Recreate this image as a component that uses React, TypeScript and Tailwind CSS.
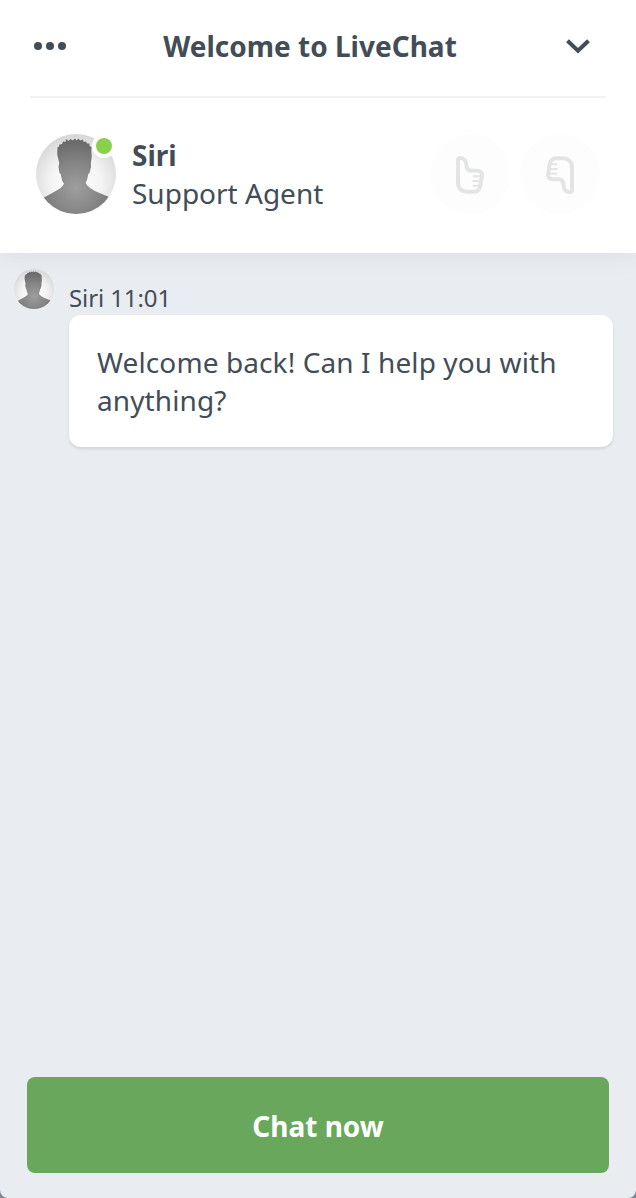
import { useId } from "react";

function Avatar({ className }: { className?: string }) {
  const id = useId();

  return (
    <svg viewBox="0 0 80 80" className={className} aria-hidden="true">
      <defs>
        <radialGradient id={`${id}-bg`} cx="0.5" cy="0.6" r="0.62">
          <stop offset="0" stopColor="#ffffff" />
          <stop offset="0.5" stopColor="#f4f4f4" />
          <stop offset="1" stopColor="#d4d4d4" />
        </radialGradient>
        <radialGradient id={`${id}-fg`} cx="40" cy="54" r="50" gradientUnits="userSpaceOnUse">
          <stop offset="0" stopColor="#9e9e9e" />
          <stop offset="0.5" stopColor="#858585" />
          <stop offset="1" stopColor="#666666" />
        </radialGradient>
        <clipPath id={`${id}-clip`}>
          <circle cx="40" cy="40" r="40" />
        </clipPath>
      </defs>
      <g clipPath={`url(#${id}-clip)`}>
        <rect width="80" height="80" fill={`url(#${id}-bg)`} />
        <path
          fill={`url(#${id}-fg)`}
          d="M21.3 17L21.5 13.5L23 12.5L23.5 10.5L26 10L27 7.5L29.5 8L30 5L32.5 7L34.5 5L36.5 6.5L39 4.5L40.5 6.5L42.5 4.5L44 6.5L47 5.5L47.5 8L50 7.5L51 9.5L53.5 9.5L53.5 12L55.5 13L55.3 18L55.8 22L54.9 29L55 33L53.5 39L52.3 40L51 46L49.6 49C51 52 55 55 60 57.5L73 63L80 80H0L8 63.5L18 58C23 55.5 26.5 53 28 49.5L26.2 47L24.7 40L23.5 39L22.5 33L23.2 29L21.3 21Z"
        />
      </g>
    </svg>
  );
}

function ThumbIcon({ className }: { className?: string }) {
  return (
    <svg
      viewBox="0 0 28 38"
      className={className}
      fill="none"
      stroke="currentColor"
      strokeLinejoin="round"
      aria-hidden="true"
    >
      <path
        strokeWidth="4"
        d="M2 4.5Q2 2 4.3 2C8 2 10.3 4.8 10.3 8.5C10.3 12 12 14.8 15.5 14.8H21C24.8 14.8 26.3 17 25.8 20.5L24.4 29.5C23.7 33.8 21.3 35.8 17.5 35.8H11.5C5.5 35.8 2 32 2 26.5Z"
      />
      <path strokeWidth="2" d="M17.5 20.2H25M17 25H25M17.5 29.8H24" strokeLinecap="round" />
    </svg>
  );
}

export default function App() {
  return (
    <div className="h-[1198px] w-[636px] overflow-hidden bg-[#7f8793] font-['Noto_Sans',sans-serif] text-[28px] text-[#434d57]">
      <div className="flex h-full flex-col overflow-hidden rounded-b-lg bg-[#e9edf2]">
        <header className="h-[253px] shrink-0 bg-white px-[30px] shadow-[0_0_24px_rgba(67,77,87,0.1)]">
          <div className="flex h-[98px] items-center border-b-2 border-[#f1f1f1] pr-4 pb-1 pl-1">
            <button aria-label="Menu" className="flex w-8 gap-1">
              <span className="size-2 rounded-full bg-current" />
              <span className="size-2 rounded-full bg-current" />
              <span className="size-2 rounded-full bg-current" />
            </button>
            <h1 className="flex-1 pr-3 text-center font-bold whitespace-nowrap">Welcome to LiveChat</h1>
            <button aria-label="Minimize">
              <svg viewBox="0 0 24 16" className="h-4 w-6" fill="none" stroke="currentColor" strokeWidth="4">
                <path d="M1.5 2.8L12 12.8L22.5 2.8" />
              </svg>
            </button>
          </div>

          <div className="flex items-center px-1.5 pt-9">
            <div className="relative size-20">
              <Avatar className="size-20" />
              <span className="absolute top-0 right-0 size-6 rounded-full border-4 border-white bg-[#8ad14b]" />
            </div>
            <div className="ml-4 flex-1 leading-[38px]">
              <p className="font-bold">Siri</p>
              <p>Support Agent</p>
            </div>
            <div className="flex gap-2.5 text-[#e3e4e6]">
              <button aria-label="Rate good" className="flex size-20 items-center justify-center rounded-full bg-[#fdfdfd]">
                <ThumbIcon className="mt-0.5 h-[38px] w-7" />
              </button>
              <button aria-label="Rate bad" className="flex size-20 items-center justify-center rounded-full bg-[#fdfdfd]">
                <ThumbIcon className="mt-0.5 h-[38px] w-7 rotate-180" />
              </button>
            </div>
          </div>
        </header>

        <main className="flex flex-1 gap-[15px] pt-4 pr-[23px] pl-3.5">
          <Avatar className="size-10 shrink-0" />
          <div className="flex-1 pt-3">
            <p className="h-[34px] text-2xl leading-[34px] tracking-[-0.1px]">Siri 11:01</p>
            <div className="rounded-xl bg-white px-7 py-7 leading-[38px] tracking-[0.1px] shadow-[0_2px_3px_rgba(67,77,87,0.15)]">
              Welcome back! Can I help you with anything?
            </div>
          </div>
        </main>

        <footer className="px-[27px] pb-[25px]">
          <button className="h-24 w-full rounded-lg bg-[#69a85c] pt-0.5 font-bold text-white">Chat now</button>
        </footer>
      </div>
    </div>
  );
}
